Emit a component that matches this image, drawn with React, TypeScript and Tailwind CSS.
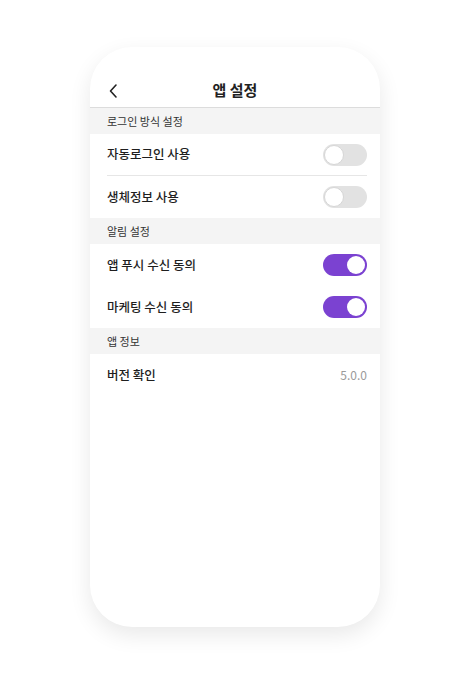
function Toggle({ on }: { on: boolean }) {
  return on ? (
    <div className="w-[44px] h-[22px] rounded-full bg-[#7b42d1] flex items-center justify-end p-[2px]">
      <div className="w-[18px] h-[18px] rounded-full bg-white" />
    </div>
  ) : (
    <div className="w-[44px] h-[22px] rounded-full bg-[#e2e2e2] flex items-center p-[1px]">
      <div className="w-[20px] h-[20px] rounded-full bg-white border border-[#d6d6d6]" />
    </div>
  )
}

function Section({ title }: { title: string }) {
  return (
    <div className="h-[26px] bg-[#f4f4f4] flex items-center px-[17px] text-[11px] text-[#333]">{title}</div>
  )
}

function Row({ label, on, divider }: { label: string; on: boolean; divider?: boolean }) {
  return (
    <div className="px-[13px] pl-[17px]">
      <div className={`h-[42px] flex items-center justify-between ${divider ? 'border-b border-[#e6e6e6]' : ''}`}>
        <span className="text-[12.5px] font-medium text-[#1e1e1e]">{label}</span>
        <Toggle on={on} />
      </div>
    </div>
  )
}

export default function App() {
  return (
    <div className="w-full h-[682px] bg-white flex justify-center" style={{ fontFamily: '"Noto Sans CJK KR", "Noto Sans", sans-serif' }}>
      <div className="mt-[47px] w-[290px] h-[580px] rounded-[42px] bg-white shadow-[0_8px_22px_rgba(0,0,0,0.09)] overflow-hidden">
        <div className="pt-[27px]">
          <div className="h-[34px] border-b border-[#dcdcdc] flex items-center relative">
            <svg className="absolute left-[18px]" width="10" height="16" viewBox="0 0 10 16" fill="none">
              <path d="M8 2 L2.5 8 L8 14" stroke="#222" strokeWidth="1.6" strokeLinecap="round" strokeLinejoin="round" />
            </svg>
            <div className="w-full text-center text-[15px] font-bold text-[#222]">앱 설정</div>
          </div>
        </div>
        <Section title="로그인 방식 설정" />
        <Row label="자동로그인 사용" on={false} divider />
        <Row label="생체정보 사용" on={false} />
        <Section title="알림 설정" />
        <Row label="앱 푸시 수신 동의" on />
        <Row label="마케팅 수신 동의" on />
        <Section title="앱 정보" />
        <div className="h-[42px] flex items-center justify-between pl-[17px] pr-[13px]">
          <span className="text-[12.5px] font-medium text-[#1e1e1e]">버전 확인</span>
          <span className="text-[12px] text-[#9a9a9a]">5.0.0</span>
        </div>
      </div>
    </div>
  )
}
